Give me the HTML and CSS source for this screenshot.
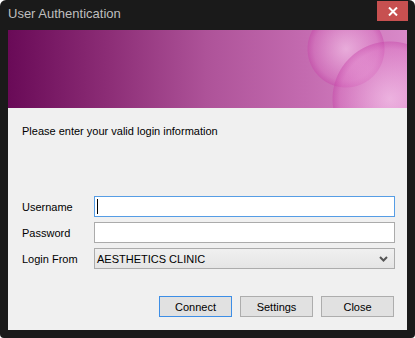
FILE: index.html
```html
<!DOCTYPE html>
<html lang="en">
<head>
  <meta charset="UTF-8">
  <title>User Authentication</title>
  <link rel="stylesheet" href="styles.css">
</head>
<body>
  <div class="window">
    <div class="titlebar">
      <span class="title">User Authentication</span>
      <button class="btn-close" aria-label="Close">
        <svg width="10" height="9" viewBox="0 0 10 9">
          <path d="M1 0.5 L9 8.5 M9 0.5 L1 8.5" stroke="#fff" stroke-width="2" fill="none"/>
        </svg>
      </button>
    </div>

    <div class="client">
      <div class="banner"></div>

      <p class="message">Please enter your valid login information</p>

      <div class="form">
        <div class="row">
          <label>Username</label>
          <div class="field focused"><span class="caret"></span></div>
        </div>
        <div class="row">
          <label>Password</label>
          <div class="field"></div>
        </div>
        <div class="row">
          <label>Login From</label>
          <div class="combo">
            <span>AESTHETICS CLINIC</span>
            <svg width="9" height="6" viewBox="0 0 9 6">
              <path d="M1 1 L4.5 4.5 L8 1" stroke="#555" stroke-width="2" fill="none"/>
            </svg>
          </div>
        </div>
      </div>

      <div class="buttons">
        <button class="btn default">Connect</button>
        <button class="btn">Settings</button>
        <button class="btn">Close</button>
      </div>
    </div>
  </div>
</body>
</html>
```

FILE: styles.css
```css
body {
  margin: 0;
  background-color: #ffffff;
  font-family: 'Liberation Sans', Arial, sans-serif;
  font-size: 11px;
  color: #000;
}
.window {
  width: 415px;
  height: 338px;
  box-sizing: border-box;
  background-color: #1a1a1a;
  padding: 0 8px 8px 8px;
  border-radius: 6px 6px 4px 4px;
}
.titlebar {
  height: 30px;
  display: flex;
  justify-content: space-between;
  align-items: flex-start;
}
.title {
  margin-top: 6px;
  font-size: 13px;
  color: #bfbfbf;
}
.btn-close {
  margin-top: 1px;
  margin-right: -1px;
  width: 31px;
  height: 20px;
  border: none;
  padding: 0;
  background-color: #c75050;
  display: flex;
  align-items: center;
  justify-content: center;
}
.client {
  height: 300px;
  background-color: #f0f0f0;
  display: flex;
  flex-direction: column;
}
.banner {
  height: 78px;
  background:
    radial-gradient(circle 58px at 382px 69px, rgba(255,215,245,0.55) 0, rgba(225,120,200,0.35) 50px, rgba(200,70,170,0.45) 57px, transparent 58px),
    radial-gradient(circle 39px at 338px 19px, rgba(255,215,245,0.55) 0, rgba(225,120,200,0.35) 32px, rgba(200,70,170,0.45) 38px, transparent 39px),
    linear-gradient(90deg, #690a57 0%, #8c2d76 25%, #ae5399 50%, #c46bb0 75%, #d98ac9 100%);
}
.message {
  margin: 16px 0 0 14px;
  line-height: 14px;
}
.form {
  margin-top: 58px;
  padding: 0 12px 0 14px;
  display: flex;
  flex-direction: column;
  gap: 5px;
}
.row {
  display: flex;
  align-items: center;
  height: 21px;
}
.row label {
  width: 72px;
}
.field {
  flex: 1;
  height: 21px;
  box-sizing: border-box;
  background-color: #fff;
  border: 1px solid #ababab;
  display: flex;
  align-items: center;
  padding-left: 2px;
}
.field.focused {
  border-color: #569de5;
}
.caret {
  width: 1px;
  height: 15px;
  background-color: #000;
}
.combo {
  flex: 1;
  height: 21px;
  box-sizing: border-box;
  border: 1px solid #acacac;
  background: linear-gradient(#f0f0f0, #e5e5e5);
  display: flex;
  align-items: center;
  justify-content: space-between;
  padding: 0 6px 0 2px;
}
.buttons {
  margin-top: 27px;
  padding-right: 13px;
  display: flex;
  justify-content: flex-end;
  gap: 8px;
}
.btn {
  width: 73px;
  height: 21px;
  padding: 0;
  font-family: 'Liberation Sans', Arial, sans-serif;
  font-size: 11px;
  color: #000;
  background-color: #e1e1e1;
  border: 1px solid #adadad;
}
.btn.default {
  border-color: #3d8ee6;
}
```
